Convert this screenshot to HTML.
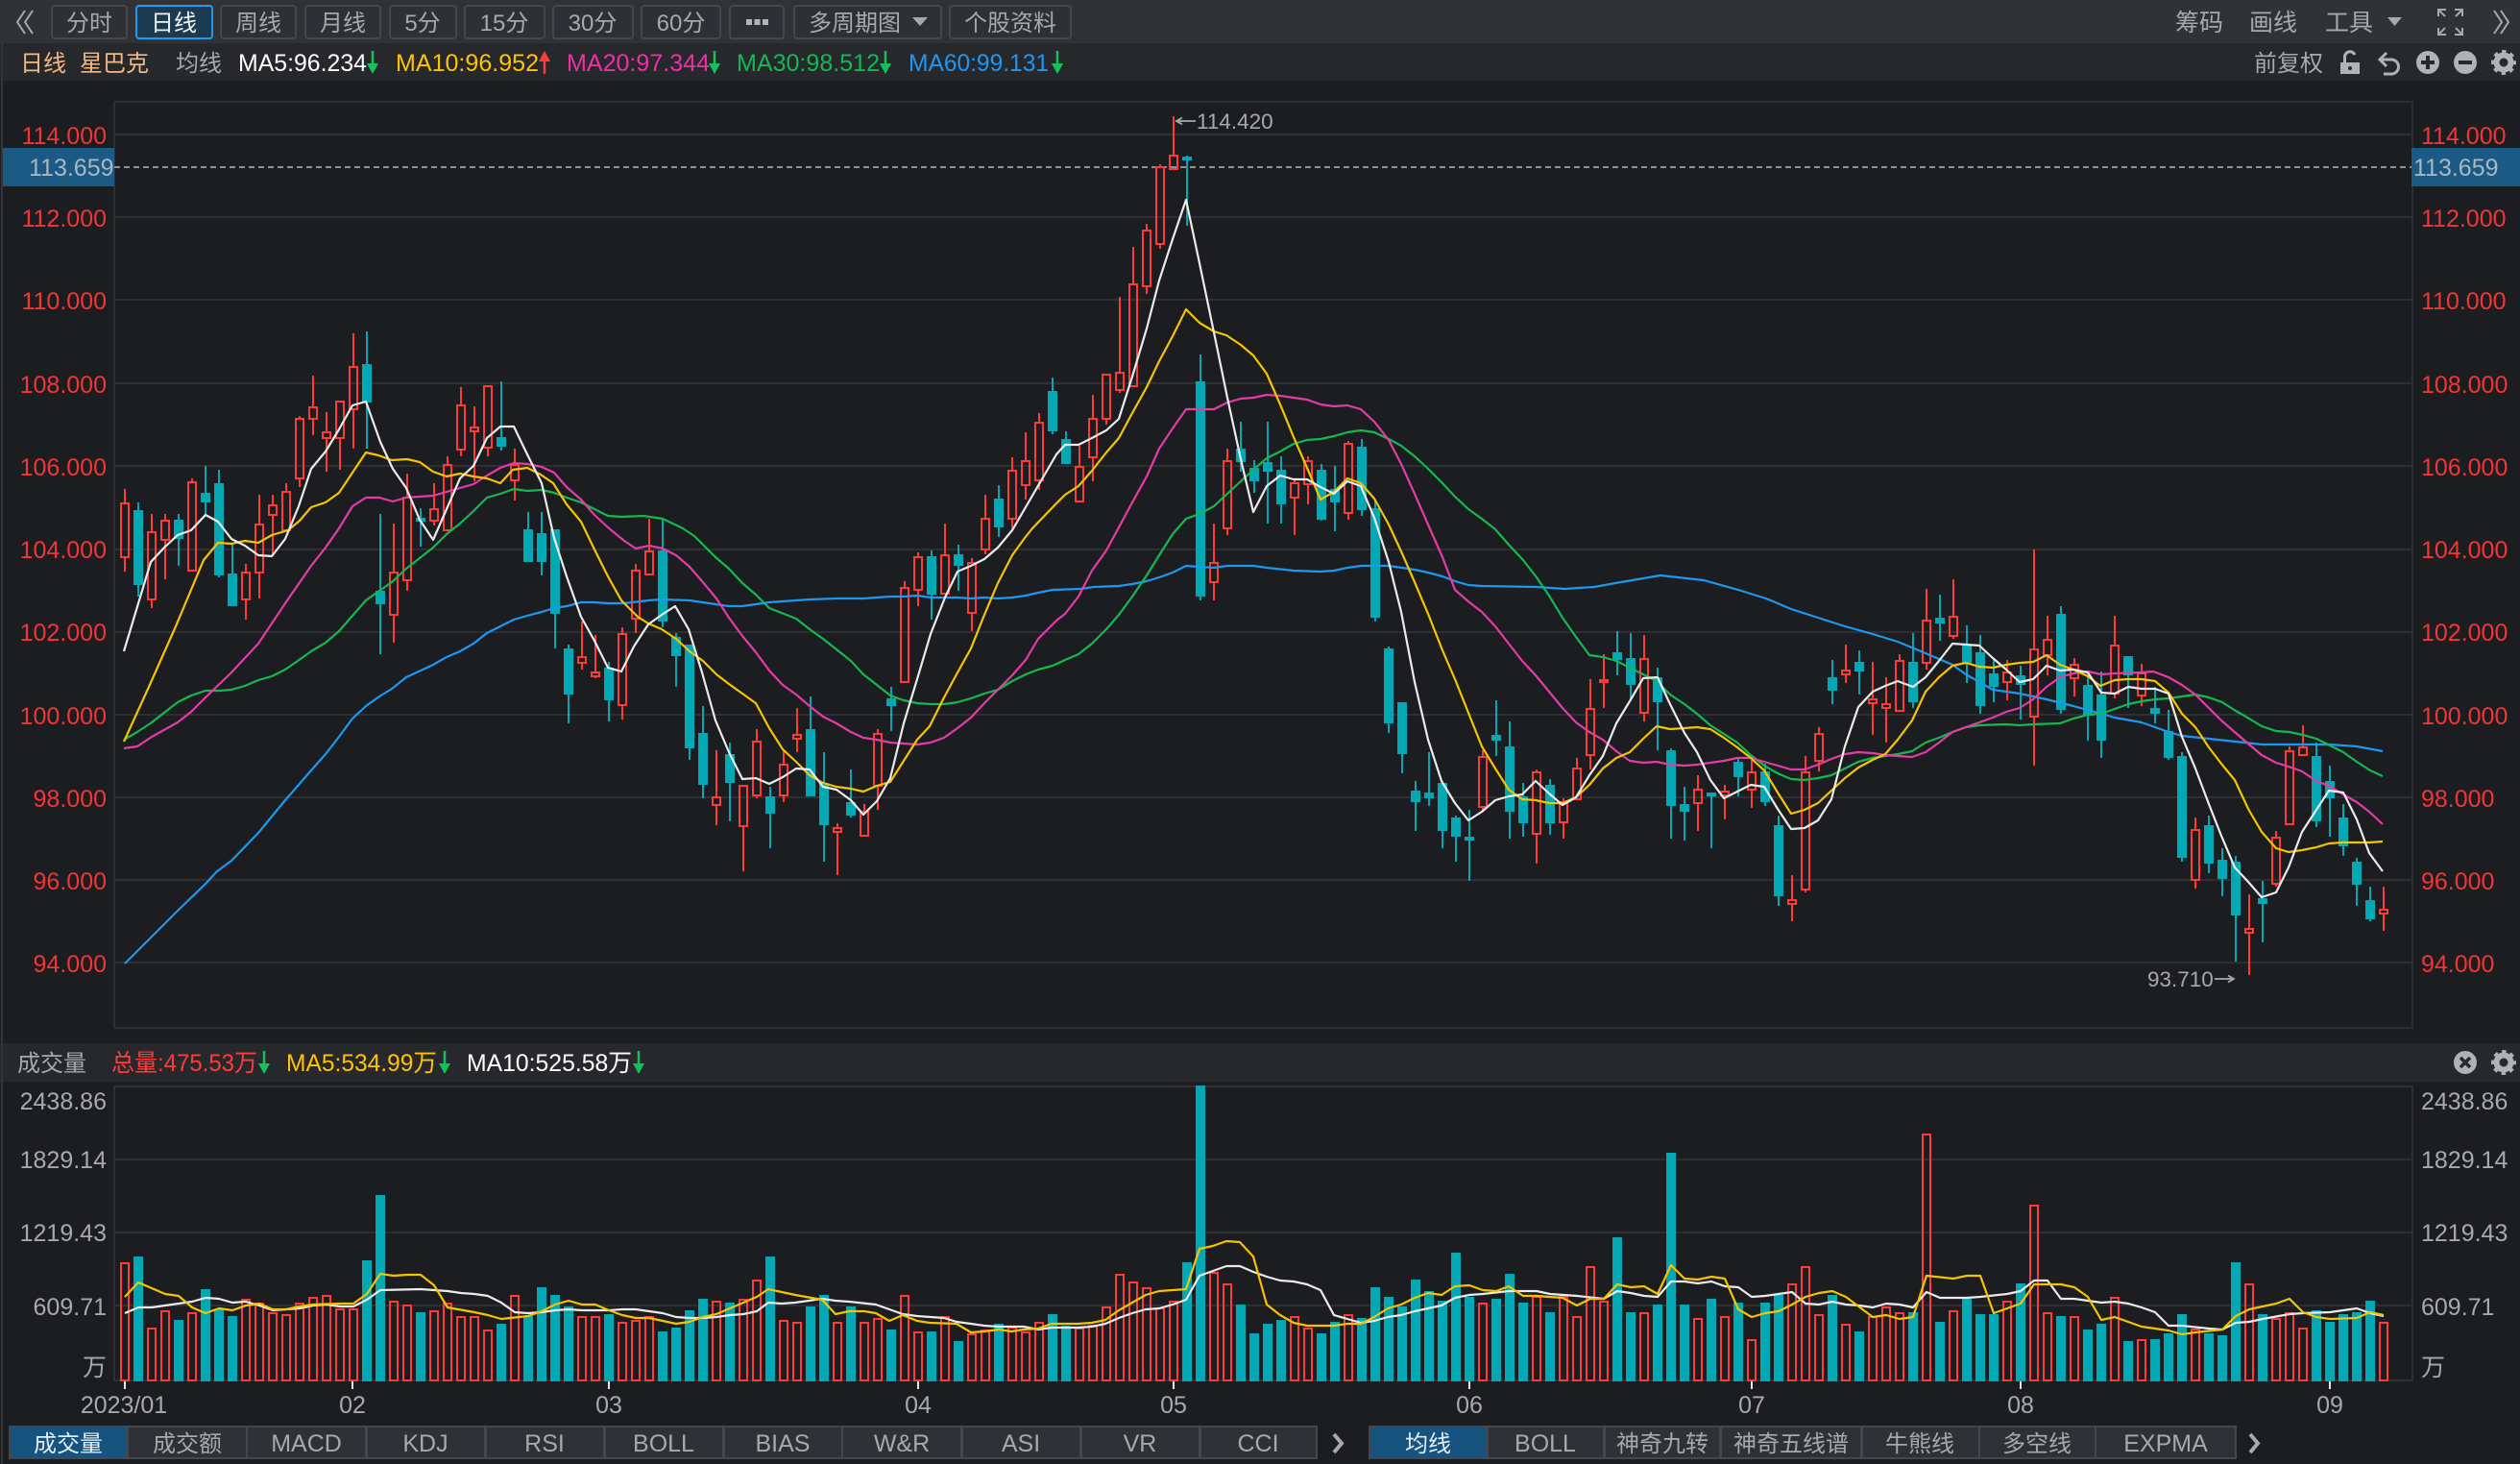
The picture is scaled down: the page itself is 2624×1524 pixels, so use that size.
<!DOCTYPE html>
<html lang="zh"><head><meta charset="utf-8"><title>星巴克 日线</title>
<style>
html,body{margin:0;padding:0;background:#1c1d21;width:2624px;height:1524px;overflow:hidden}
svg{display:block}
text{font-family:"Liberation Sans","Noto Sans CJK SC",sans-serif;font-size:25px;fill:#a7a9ab}
.r{fill:#f23535}.m{text-anchor:middle}.e{text-anchor:end}
.l{fill:none;stroke-width:2.2;stroke-linejoin:round}
</style></head><body>
<svg xmlns="http://www.w3.org/2000/svg" width="2624" height="1524" viewBox="0 0 2624 1524">
<rect width="2624" height="1524" fill="#1c1d21"/>
<!-- top bars -->
<rect width="2624" height="45" fill="#303236"/>
<rect y="45" width="2624" height="39" fill="#26282c"/>
<rect x="0" y="1086" width="2624" height="40" fill="#26282c"/>
<rect x="1" y="45" width="2" height="1479" fill="#33353a"/>
<!-- toolbar -->
<path d="M26 11L18 23L26 35M34 11L26 23L34 35" fill="none" stroke="#a7a9ab" stroke-width="2"/>
<g fill="#2e3035" stroke="#45474d" stroke-width="2">
<rect x="54" y="6" width="78" height="34" rx="3"/>
<rect x="230" y="6" width="78" height="34" rx="3"/>
<rect x="318" y="6" width="78" height="34" rx="3"/>
<rect x="406" y="6" width="69" height="34" rx="3"/>
<rect x="484" y="6" width="83" height="34" rx="3"/>
<rect x="576" y="6" width="83" height="34" rx="3"/>
<rect x="668" y="6" width="82" height="34" rx="3"/>
<rect x="760" y="6" width="56" height="34" rx="3"/>
<rect x="827" y="6" width="153" height="34" rx="3"/>
<rect x="989" y="6" width="126" height="34" rx="3"/>
</g>
<rect x="142" y="6" width="79" height="34" rx="3" fill="#1c3a50" stroke="#1e9bf0" stroke-width="2"/>
<text x="93" y="32" class="m" style="font-size:24px">分时</text>
<text x="181" y="32" class="m" style="fill:#f0f4f7;font-size:24px">日线</text>
<text x="269" y="32" class="m" style="font-size:24px">周线</text>
<text x="357" y="32" class="m" style="font-size:24px">月线</text>
<text x="440" y="32" class="m" style="font-size:24px">5分</text>
<text x="525" y="32" class="m" style="font-size:24px">15分</text>
<text x="617" y="32" class="m" style="font-size:24px">30分</text>
<text x="709" y="32" class="m" style="font-size:24px">60分</text>
<path d="M777 20h6v6h-6zM785.500 20h6v6h-6zM794 20h6v6h-6z" fill="#b4b6b8"/>
<text x="842" y="32" style="font-size:24px">多周期图</text>
<path d="M950 18h16l-8 9z" fill="#a7a9ab"/>
<text x="1052" y="32" class="m" style="font-size:24px">个股资料</text>
<text x="2265" y="32">筹码</text>
<text x="2342" y="32">画线</text>
<text x="2421" y="32">工具</text>
<path d="M2486 18h15l-7.500 9z" fill="#a7a9ab"/>
<path d="M2539 17V10h8M2539 10L2546 17M2564 17V10h-8M2564 10L2557 17M2539 29V36h8M2539 36L2546 29M2564 29V36h-8M2564 36L2557 29" fill="none" stroke="#a7a9ab" stroke-width="2"/>
<path d="M2597 11L2605 23L2597 35M2604 11L2612 23L2604 35" fill="none" stroke="#a7a9ab" stroke-width="2"/>
<!-- row 2 -->
<text x="21" y="74" style="fill:#f2b885;font-size:24px">日线</text>
<text x="83" y="74" style="fill:#f2b885;font-size:24px">星巴克</text>
<text x="183" y="74" style="font-size:24px">均线</text>
<text x="248" y="74" style="fill:#fff" textLength="134" lengthAdjust="spacingAndGlyphs">MA5:96.234</text>
<text x="412" y="74" style="fill:#ffc400" textLength="149" lengthAdjust="spacingAndGlyphs">MA10:96.952</text>
<text x="590" y="74" style="fill:#ef2fa6" textLength="149" lengthAdjust="spacingAndGlyphs">MA20:97.344</text>
<text x="767" y="74" style="fill:#13b950" textLength="149" lengthAdjust="spacingAndGlyphs">MA30:98.512</text>
<text x="946" y="74" style="fill:#1e96f5" textLength="146" lengthAdjust="spacingAndGlyphs">MA60:99.131</text>
<path d="M388 53V66" stroke="#13c25a" stroke-width="2.500"/><path d="M382 66h12l-6 11z" fill="#13c25a"/>
<path d="M567 77V64" stroke="#ff3b3b" stroke-width="2.500"/><path d="M561 64h12l-6-11z" fill="#ff3b3b"/>
<path d="M744 53V66" stroke="#13c25a" stroke-width="2.500"/><path d="M738 66h12l-6 11z" fill="#13c25a"/>
<path d="M922 53V66" stroke="#13c25a" stroke-width="2.500"/><path d="M916 66h12l-6 11z" fill="#13c25a"/>
<path d="M1101 53V66" stroke="#13c25a" stroke-width="2.500"/><path d="M1095 66h12l-6 11z" fill="#13c25a"/>
<text x="2347" y="74" style="font-size:24px">前复权</text>
<path d="M2437 65h20v12h-20z" fill="#b0b2b4"/><path d="M2441.500 65v-5.500a5.500 5.500 0 0 1 10.500-2.500" fill="none" stroke="#b0b2b4" stroke-width="3"/><circle cx="2447" cy="71" r="2" fill="#26282c"/>
<path d="M2478 62H2490a7.500 7.500 0 0 1 0 15H2482M2485 55L2478 62L2485 69" fill="none" stroke="#b0b2b4" stroke-width="3"/>
<circle cx="2528" cy="65" r="12" fill="#b0b2b4"/><path d="M2521 65h14M2528 58v14" stroke="#26282c" stroke-width="4"/>
<circle cx="2567" cy="65" r="12" fill="#b0b2b4"/><path d="M2560 65h14" stroke="#26282c" stroke-width="4"/>
<circle cx="2607" cy="65" r="7.500" fill="none" stroke="#b0b2b4" stroke-width="6"/><circle cx="2607" cy="65" r="11" fill="none" stroke="#b0b2b4" stroke-width="4" stroke-dasharray="4.320 4.320" stroke-dashoffset="2.160"/>
<!-- price grid -->
<g stroke="#2e2f33" stroke-width="2">
<path d="M119 140H2511M119 226H2511M119 312H2511M119 399H2511M119 485H2511M119 572H2511M119 658H2511M119 744H2511M119 830H2511M119 916H2511M119 1002H2511"/>
<path d="M119 106H2512M119 1070H2512M119 105V1071M2512 105V1071"/>
<path d="M119 1131H2512M119 1207H2512M119 1283H2512M119 1359H2512M119 1437H2512M119 1130V1438M2512 1130V1438"/>
</g>
<rect x="3" y="154" width="116" height="40" fill="#1a5a85"/>
<rect x="2511" y="154" width="113" height="40" fill="#1a5a85"/>
<path d="M119 174H2511" stroke="#8d8e90" stroke-width="2" stroke-dasharray="6 4"/>
<!-- price labels -->
<g class="r">
<text class="r e" x="111" y="150">114.000</text><text class="r e" x="111" y="236">112.000</text><text class="r e" x="111" y="322">110.000</text><text class="r e" x="111" y="409">108.000</text><text class="r e" x="111" y="495">106.000</text><text class="r e" x="111" y="581">104.000</text><text class="r e" x="111" y="667">102.000</text><text class="r e" x="111" y="754">100.000</text><text class="r e" x="111" y="840">98.000</text><text class="r e" x="111" y="926">96.000</text><text class="r e" x="111" y="1012">94.000</text>
<text class="r" x="2521" y="150">114.000</text><text class="r" x="2521" y="236">112.000</text><text class="r" x="2521" y="322">110.000</text><text class="r" x="2521" y="409">108.000</text><text class="r" x="2521" y="495">106.000</text><text class="r" x="2521" y="581">104.000</text><text class="r" x="2521" y="667">102.000</text><text class="r" x="2521" y="754">100.000</text><text class="r" x="2521" y="840">98.000</text><text class="r" x="2521" y="926">96.000</text><text class="r" x="2521" y="1012">94.000</text>
</g>
<text x="30" y="183" style="fill:#a9b8c0">113.659</text>
<text x="2513" y="183" style="fill:#a9b8c0">113.659</text>
<path d="M1245 126H1225M1231 122.500L1225 126L1231 129.500" fill="none" stroke="#a7a9ab" stroke-width="1.800"/>
<text x="1246" y="134" style="font-size:22.500px">114.420</text>
<text x="2236" y="1027" style="font-size:22.500px">93.710</text>
<path d="M2306 1019H2326M2320 1015.500L2326 1019L2320 1022.500" fill="none" stroke="#a7a9ab" stroke-width="1.800"/>
<!-- candles -->
<path fill="none" stroke="#ff3838" stroke-width="2" d="M130 509V524M130 580V595M126 524h8V580h-8zM158 535V554M158 624V633M154 554h8V624h-8zM172 535V542M172 562V603M168 542h8V562h-8zM200 498V502M196 502h8V594h-8zM256 587V596M256 624V645M252 596h8V624h-8zM270 515V546M270 596V623M266 546h8V596h-8zM284 515V526M284 536V578M280 526h8V536h-8zM298 503V512M294 512h8V552h-8zM312 433V436M312 498V507M308 436h8V498h-8zM326 391V424M326 436V453M322 424h8V436h-8zM340 429V450M340 456V491M336 450h8V456h-8zM354 456V489M350 418h8V456h-8zM368 347V382M368 426V467M364 382h8V426h-8zM410 545V596M410 640V669M406 596h8V640h-8zM424 493V518M424 604V615M420 518h8V604h-8zM452 503V530M452 542V547M448 530h8V542h-8zM466 475V484M462 484h8V552h-8zM480 403V422M480 468V475M476 422h8V468h-8zM494 423V445M494 449V501M490 445h8V449h-8zM508 466V475M504 402h8V466h-8zM536 467V484M536 500V521M532 484h8V500h-8zM606 647V684M606 690V697M602 684h8V690h-8zM620 661V700M620 704V706M616 700h8V704h-8zM648 653V660M648 734V749M644 660h8V734h-8zM662 587V594M662 644V659M658 594h8V644h-8zM676 540V574M672 574h8V598h-8zM746 781V830M746 838V859M742 830h8V838h-8zM774 860V907M770 818h8V860h-8zM788 759V772M788 828V831M784 772h8V828h-8zM816 781V796M816 828V835M812 796h8V828h-8zM830 737V765M830 769V783M826 765h8V769h-8zM872 857V862M872 866V911M868 862h8V866h-8zM900 837V845M896 845h8V870h-8zM914 759V764M914 818V843M910 764h8V818h-8zM942 605V612M938 612h8V710h-8zM956 575V580M956 614V631M952 580h8V614h-8zM984 545V578M980 578h8V618h-8zM1012 581V586M1012 638V657M1008 586h8V638h-8zM1026 515V540M1026 572V577M1022 540h8V572h-8zM1054 476V490M1054 540V550M1050 490h8V540h-8zM1068 450V480M1068 505V520M1064 480h8V505h-8zM1082 430V440M1082 500V510M1078 440h8V500h-8zM1124 464V486M1120 486h8V522h-8zM1138 411V436M1138 476V501M1134 436h8V476h-8zM1152 436V442M1148 390h8V436h-8zM1166 309V388M1166 406V409M1162 388h8V406h-8zM1180 257V296M1176 296h8V402h-8zM1194 233V240M1194 298V306M1190 240h8V298h-8zM1208 171V174M1208 254V259M1204 174h8V254h-8zM1222 121V162M1218 162h8V176h-8zM1264 545V586M1264 606V625M1260 586h8V606h-8zM1278 467V480M1278 550V557M1274 480h8V550h-8zM1348 499V503M1348 518V557M1344 503h8V518h-8zM1362 475V480M1362 504V525M1358 480h8V504h-8zM1404 459V462M1404 534V541M1400 462h8V534h-8zM1544 781V788M1544 840V844M1540 788h8V840h-8zM1600 801V804M1600 868V899M1596 804h8V868h-8zM1628 831V835M1628 856V873M1624 835h8V856h-8zM1642 789V800M1638 800h8V832h-8zM1656 707V738M1656 786V801M1652 738h8V786h-8zM1670 681V708M1670 710V737M1666 708h8V710h-8zM1712 661V686M1712 742V751M1708 686h8V742h-8zM1768 807V822M1768 836V865M1764 822h8V836h-8zM1796 817V824M1796 828V853M1792 824h8V828h-8zM1824 791V804M1824 822V841M1820 804h8V822h-8zM1866 911V937M1866 941V959M1862 937h8V941h-8zM1880 787V804M1880 926V929M1876 804h8V926h-8zM1894 757V764M1894 792V803M1890 764h8V792h-8zM1922 671V698M1922 702V711M1918 698h8V702h-8zM1950 689V728M1950 732V765M1946 728h8V732h-8zM1964 705V733M1964 737V773M1960 733h8V737h-8zM1978 681V688M1974 688h8V740h-8zM2006 613V646M2006 690V697M2002 646h8V690h-8zM2034 603V642M2034 662V665M2030 642h8V662h-8zM2090 687V700M2090 710V729M2086 700h8V710h-8zM2118 572V676M2118 746V797M2114 676h8V746h-8zM2132 641V666M2132 682V703M2128 666h8V682h-8zM2160 685V692M2160 706V725M2156 692h8V706h-8zM2202 641V672M2202 722V727M2198 672h8V722h-8zM2230 691V701M2230 724V735M2226 701h8V724h-8zM2286 851V864M2286 916V925M2282 864h8V916h-8zM2342 931V967M2342 971V1015M2338 967h8V971h-8zM2370 865V872M2370 920V923M2366 872h8V920h-8zM2384 777V782M2380 782h8V858h-8zM2398 755V778M2394 778h8V786h-8zM2482 923V947M2482 951V969M2478 947h8V951h-8z"/>
<path fill="#02a9b5" d="M143 523h2V621h-2zM139 531h10V609h-10zM185 535h2V589h-2zM181 541h10V561h-10zM213 485h2V536h-2zM209 513h10V523h-10zM227 489h2V601h-2zM223 503h10V599h-10zM241 567h2V631h-2zM237 597h10V631h-10zM381 345h2V467h-2zM377 379h10V419h-10zM395 535h2V681h-2zM391 615h10V629h-10zM437 529h2V569h-2zM433 539h10V543h-10zM521 397h2V469h-2zM517 455h10V465h-10zM549 533h2V585h-2zM545 551h10V585h-10zM563 533h2V599h-2zM559 555h10V585h-10zM577 551h2V675h-2zM573 551h10V639h-10zM591 671h2V753h-2zM587 675h10V723h-10zM633 689h2V751h-2zM629 695h10V729h-10zM689 540h2V653h-2zM685 573h10V647h-10zM703 659h2V715h-2zM699 663h10V683h-10zM717 671h2V791h-2zM713 671h10V779h-10zM731 735h2V831h-2zM727 763h10V817h-10zM759 773h2V855h-2zM755 785h10V815h-10zM801 819h2V883h-2zM797 829h10V847h-10zM843 725h2V829h-2zM839 759h10V829h-10zM857 783h2V897h-2zM853 815h10V859h-10zM885 801h2V851h-2zM881 835h10V849h-10zM927 715h2V761h-2zM923 727h10V735h-10zM969 573h2V645h-2zM965 579h10V619h-10zM997 567h2V615h-2zM993 577h10V589h-10zM1039 505h2V559h-2zM1035 519h10V549h-10zM1095 393h2V452h-2zM1091 407h10V449h-10zM1109 449h2V483h-2zM1105 457h10V483h-10zM1235 162h2V235h-2zM1231 163h10V167h-10zM1249 369h2V625h-2zM1245 397h10V621h-10zM1291 439h2V491h-2zM1287 467h10V481h-10zM1305 479h2V513h-2zM1301 487h10V501h-10zM1319 439h2V545h-2zM1315 481h10V491h-10zM1333 475h2V545h-2zM1329 489h10V525h-10zM1375 483h2V542h-2zM1371 489h10V541h-10zM1389 485h2V553h-2zM1385 509h10V523h-10zM1417 457h2V537h-2zM1413 465h10V531h-10zM1431 521h2V647h-2zM1427 529h10V643h-10zM1445 673h2V763h-2zM1441 675h10V753h-10zM1459 731h2V805h-2zM1455 731h10V785h-10zM1473 813h2V865h-2zM1469 823h10V835h-10zM1487 783h2V839h-2zM1483 825h10V831h-10zM1501 815h2V883h-2zM1497 815h10V865h-10zM1515 849h2V897h-2zM1511 851h10V871h-10zM1529 843h2V917h-2zM1525 871h10V875h-10zM1557 729h2V787h-2zM1553 765h10V771h-10zM1571 751h2V873h-2zM1567 777h10V845h-10zM1585 815h2V871h-2zM1581 829h10V857h-10zM1613 811h2V869h-2zM1609 817h10V857h-10zM1683 657h2V703h-2zM1679 679h10V687h-10zM1697 659h2V727h-2zM1693 685h10V713h-10zM1725 695h2V781h-2zM1721 705h10V731h-10zM1739 779h2V873h-2zM1735 781h10V839h-10zM1753 819h2V875h-2zM1749 837h10V845h-10zM1781 825h2V883h-2zM1777 825h10V829h-10zM1809 790h2V829h-2zM1805 793h10V809h-10zM1837 795h2V839h-2zM1833 803h10V835h-10zM1851 849h2V943h-2zM1847 859h10V933h-10zM1907 687h2V733h-2zM1903 705h10V719h-10zM1935 677h2V723h-2zM1931 689h10V699h-10zM1991 659h2V737h-2zM1987 689h10V731h-10zM2019 619h2V667h-2zM2015 643h10V649h-10zM2047 651h2V711h-2zM2043 671h10V691h-10zM2061 661h2V743h-2zM2057 679h10V735h-10zM2075 687h2V731h-2zM2071 701h10V715h-10zM2103 693h2V749h-2zM2099 703h10V713h-10zM2145 631h2V743h-2zM2141 639h10V739h-10zM2173 700h2V771h-2zM2169 713h10V745h-10zM2187 699h2V789h-2zM2183 723h10V771h-10zM2215 683h2V737h-2zM2211 683h10V703h-10zM2243 715h2V753h-2zM2239 737h10V743h-10zM2257 739h2V791h-2zM2253 761h10V789h-10zM2271 783h2V897h-2zM2267 787h10V893h-10zM2299 849h2V909h-2zM2295 859h10V899h-10zM2313 883h2V933h-2zM2309 895h10V915h-10zM2327 891h2V1001h-2zM2323 897h10V953h-10zM2355 917h2V981h-2zM2351 935h10V941h-10zM2411 773h2V861h-2zM2407 787h10V855h-10zM2425 797h2V871h-2zM2421 813h10V831h-10zM2439 837h2V891h-2zM2435 851h10V881h-10zM2453 893h2V943h-2zM2449 897h10V921h-10zM2467 923h2V959h-2zM2463 937h10V957h-10z"/>
<!-- MA60 -->
<polyline class="l" stroke="#1b98f0" points="130,1003 183,950 214,920 226,907 241,896 269,867 297,833 324,802 339,785 353,767 367,748 381,735 395,725 408,717 423,705 451,692 465,684 479,678 493,670 507,659 521,652 535,645 549,641 564,637 577,633 590,631 605,627 619,627 633,628 650,628 675,625 690,624 718,625 745,629 759,631 773,631 801,627 829,625 843,624 871,623 899,623 913,622 927,621 941,621 955,620 969,622 997,622 1011,623 1025,622 1039,623 1054,622 1068,620 1081,617 1096,614 1125,613 1139,611 1165,610 1179,608 1194,605 1207,601 1221,596 1235,589 1249,590 1264,591 1278,589 1292,589 1305,589 1319,591 1347,594 1375,595 1389,594 1403,591 1417,589 1431,589 1446,589 1473,593 1487,596 1502,600 1515,605 1529,609 1543,610 1600,611 1629,613 1660,611 1682,607 1729,599 1774,604 1810,614 1829,620 1839,623 1865,634 1893,643 1921,652 1950,660 1976,668 2005,680 2033,692 2047,702 2061,710 2075,718 2103,722 2131,728 2159,735 2188,743 2202,747 2230,752 2244,757 2258,762 2272,766 2300,769 2328,772 2355,775 2397,775 2426,775 2454,777 2481,782"/>
<!-- MA30 -->
<polyline class="l" stroke="#13b950" points="129,770 143,762 158,752 185,731 199,724 214,719 228,719 241,718 255,714 269,708 283,704 297,697 310,688 324,678 339,669 353,657 367,641 381,625 395,615 408,606 423,592 451,570 465,556 479,545 493,532 507,518 521,514 535,509 549,511 564,510 577,513 590,518 605,523 619,530 633,537 647,538 670,537 690,540 711,550 723,558 745,580 759,592 773,607 787,619 801,633 829,644 843,655 857,665 871,676 886,688 899,702 913,713 927,724 941,729 955,732 969,733 983,733 997,731 1011,727 1025,722 1039,718 1054,709 1068,702 1081,697 1096,693 1109,687 1123,681 1137,670 1152,655 1165,640 1179,621 1194,599 1207,578 1221,556 1235,540 1249,535 1264,527 1278,514 1292,501 1305,489 1319,477 1333,470 1347,462 1361,458 1375,457 1389,454 1403,450 1417,448 1431,450 1446,457 1459,464 1473,475 1487,488 1502,503 1515,517 1529,530 1543,540 1557,551 1571,567 1586,583 1600,601 1613,620 1627,643 1641,663 1655,682 1669,684 1683,688 1697,695 1711,702 1725,709 1739,723 1754,733 1767,743 1781,755 1795,764 1809,773 1823,786 1837,797 1851,805 1865,811 1879,812 1893,810 1907,807 1921,800 1935,793 1950,789 1963,787 1976,785 1991,782 2005,773 2019,768 2033,762 2047,757 2061,755 2089,754 2103,755 2117,754 2145,753 2159,748 2174,744 2188,743 2202,738 2216,733 2230,730 2244,728 2258,727 2272,725 2286,723 2300,726 2314,731 2328,740 2342,748 2355,756 2370,761 2384,762 2398,765 2412,769 2426,776 2440,783 2454,793 2468,802 2481,808"/>
<!-- MA20 -->
<polyline class="l" stroke="#e53ba5" points="129,779 143,777 158,767 185,752 199,741 214,726 241,700 269,670 297,628 324,589 339,570 353,550 367,527 381,518 395,518 409,522 423,518 451,516 479,508 493,504 507,495 521,487 535,482 549,483 564,486 577,492 590,507 605,520 619,536 633,549 650,563 662,571 676,568 690,571 704,578 718,590 731,605 746,623 759,643 773,662 787,679 801,698 815,713 829,723 843,735 857,746 871,753 886,762 899,768 913,770 927,773 941,774 955,775 969,773 983,768 997,758 1011,747 1025,732 1039,718 1054,703 1068,687 1081,665 1100,646 1109,639 1123,621 1137,594 1152,573 1165,549 1179,523 1194,496 1207,467 1221,446 1235,426 1249,426 1264,426 1278,419 1292,415 1305,414 1319,411 1333,412 1347,414 1361,416 1375,421 1389,423 1403,422 1417,426 1431,439 1446,458 1459,483 1473,514 1487,546 1502,580 1515,614 1530,627 1543,637 1557,652 1571,670 1585,688 1599,703 1613,720 1627,737 1641,752 1655,762 1669,770 1683,782 1697,792 1711,794 1725,793 1739,796 1754,797 1767,796 1781,794 1795,792 1809,789 1823,789 1837,793 1851,797 1865,801 1879,801 1893,796 1907,790 1921,785 1935,783 1950,784 1963,786 1976,787 1991,788 2005,783 2019,773 2033,762 2047,757 2061,752 2075,747 2089,741 2103,737 2117,728 2131,715 2145,705 2159,701 2174,699 2188,702 2202,701 2230,700 2242,699 2258,705 2272,713 2286,723 2300,737 2313,750 2328,763 2342,775 2355,786 2370,794 2383,798 2397,803 2412,813 2425,818 2440,827 2454,835 2467,845 2481,858"/>
<!-- MA10 -->
<polyline class="l" stroke="#f5c400" points="129,772 155,715 183,652 212,583 227,565 241,566 255,563 269,565 283,557 300,552 312,542 324,528 339,523 353,513 367,492 381,471 394,474 408,479 424,478 437,481 451,491 465,496 479,493 493,496 507,498 521,503 534,489 549,487 563,494 576,503 590,525 605,543 619,572 633,600 647,625 664,642 675,649 689,655 704,665 718,678 732,688 746,702 759,712 773,722 787,732 801,758 815,780 829,793 843,807 857,815 871,819 886,821 899,824 913,818 927,814 941,792 955,770 968,756 982,728 996,702 1011,675 1025,640 1039,607 1054,578 1067,560 1075,550 1100,524 1109,515 1123,506 1137,490 1152,471 1165,456 1179,430 1194,403 1207,376 1221,350 1235,322 1249,336 1264,345 1277,349 1292,359 1305,370 1319,389 1333,421 1347,455 1361,487 1375,520 1389,512 1403,498 1417,503 1431,519 1446,546 1459,574 1473,606 1487,639 1502,677 1515,707 1529,742 1543,777 1557,800 1571,822 1585,832 1599,833 1613,836 1627,836 1641,830 1655,817 1669,800 1683,789 1697,783 1711,769 1725,756 1739,759 1754,758 1767,757 1781,759 1795,768 1809,778 1823,789 1837,802 1851,825 1865,847 1879,843 1893,836 1907,823 1921,810 1935,799 1950,791 1963,785 1976,770 1991,750 2005,720 2019,705 2033,693 2047,690 2061,694 2075,695 2089,692 2103,690 2117,689 2131,682 2145,692 2159,697 2174,704 2187,714 2202,708 2216,707 2230,707 2244,709 2258,721 2272,743 2286,757 2300,778 2313,795 2327,812 2341,842 2355,866 2370,883 2383,887 2397,885 2412,882 2425,878 2440,877 2454,877 2467,877 2481,876"/>
<!-- MA5 -->
<polyline class="l" stroke="#ebebeb" points="129,678 157,585 171,570 185,557 199,552 214,536 227,543 241,561 255,568 269,578 283,579 297,561 311,527 324,488 339,470 353,447 367,422 381,418 396,460 409,488 423,508 437,541 451,562 465,530 479,498 493,485 507,456 521,444 535,444 549,473 564,503 577,560 590,600 605,642 619,667 633,695 647,699 660,673 675,650 689,640 703,631 717,655 731,700 745,750 759,783 773,811 787,810 801,816 815,809 829,800 843,801 857,819 871,822 886,833 899,848 913,834 927,810 941,753 955,707 969,660 984,622 997,595 1011,589 1025,582 1039,570 1054,552 1100,473 1109,463 1123,463 1137,456 1152,448 1165,436 1179,392 1194,342 1207,292 1221,249 1235,208 1249,274 1264,346 1278,414 1292,478 1305,533 1319,506 1333,495 1347,499 1361,499 1375,507 1389,514 1403,501 1417,506 1431,539 1446,585 1459,637 1473,710 1487,770 1501,813 1515,836 1529,854 1543,845 1557,833 1571,829 1585,827 1599,813 1613,826 1627,838 1641,830 1655,807 1669,787 1683,753 1697,730 1711,706 1726,705 1739,733 1754,763 1767,783 1781,812 1795,831 1809,824 1823,817 1837,819 1851,842 1865,863 1879,862 1893,854 1907,832 1921,777 1935,736 1950,720 1963,714 1976,709 1992,715 2005,705 2019,688 2033,670 2047,671 2061,672 2075,685 2089,697 2103,710 2117,707 2131,693 2145,698 2159,697 2174,700 2188,721 2202,722 2216,715 2230,717 2244,717 2258,722 2272,767 2286,800 2300,837 2313,870 2327,903 2341,918 2355,934 2370,929 2383,903 2397,866 2412,843 2425,823 2440,825 2454,853 2467,888 2481,907"/>
<!-- volume header -->
<text x="18" y="1115" style="font-size:24px">成交量</text>
<text x="116" y="1115" style="fill:#ff3b3b" textLength="152" lengthAdjust="spacingAndGlyphs">总量:475.53万</text>
<path d="M275 1094V1107" stroke="#13c25a" stroke-width="2.500"/><path d="M269 1107h12l-6 11z" fill="#13c25a"/>
<text x="298" y="1115" style="fill:#ffc400" textLength="157" lengthAdjust="spacingAndGlyphs">MA5:534.99万</text>
<path d="M463 1094V1107" stroke="#13c25a" stroke-width="2.500"/><path d="M457 1107h12l-6 11z" fill="#13c25a"/>
<text x="486" y="1115" style="fill:#fff" textLength="172" lengthAdjust="spacingAndGlyphs">MA10:525.58万</text>
<path d="M665 1094V1107" stroke="#13c25a" stroke-width="2.500"/><path d="M659 1107h12l-6 11z" fill="#13c25a"/>
<circle cx="2567" cy="1106" r="12" fill="#b0b2b4"/><path d="M2562 1101l10 10M2572 1101l-10 10" stroke="#26282c" stroke-width="3.500"/>
<circle cx="2607" cy="1106" r="7.500" fill="none" stroke="#b0b2b4" stroke-width="6"/><circle cx="2607" cy="1106" r="11" fill="none" stroke="#b0b2b4" stroke-width="4" stroke-dasharray="4.320 4.320" stroke-dashoffset="2.160"/>
<!-- volume labels -->
<text class="e" x="111" y="1155">2438.86</text><text class="e" x="111" y="1216">1829.14</text><text class="e" x="111" y="1292">1219.43</text><text class="e" x="111" y="1369">609.71</text><text class="e" x="111" y="1432">万</text>
<text x="2521" y="1155">2438.86</text><text x="2521" y="1216">1829.14</text><text x="2521" y="1292">1219.43</text><text x="2521" y="1369">609.71</text><text x="2521" y="1432">万</text>
<!-- volume bars -->
<path fill="#02a9b5" d="M139 1308h10V1438h-10zM181 1374h10V1438h-10zM209 1342h10V1438h-10zM223 1363h10V1438h-10zM237 1370h10V1438h-10zM377 1312h10V1438h-10zM391 1244h10V1438h-10zM433 1366h10V1438h-10zM517 1378h10V1438h-10zM545 1370h10V1438h-10zM559 1340h10V1438h-10zM573 1348h10V1438h-10zM587 1360h10V1438h-10zM629 1368h10V1438h-10zM685 1386h10V1438h-10zM699 1382h10V1438h-10zM713 1364h10V1438h-10zM727 1352h10V1438h-10zM755 1356h10V1438h-10zM797 1308h10V1438h-10zM839 1360h10V1438h-10zM853 1348h10V1438h-10zM881 1360h10V1438h-10zM923 1384h10V1438h-10zM965 1386h10V1438h-10zM993 1396h10V1438h-10zM1035 1378h10V1438h-10zM1091 1368h10V1438h-10zM1105 1380h10V1438h-10zM1231 1314h10V1438h-10zM1245 1130h10V1438h-10zM1287 1358h10V1438h-10zM1301 1388h10V1438h-10zM1315 1378h10V1438h-10zM1329 1374h10V1438h-10zM1371 1388h10V1438h-10zM1385 1376h10V1438h-10zM1413 1372h10V1438h-10zM1427 1340h10V1438h-10zM1441 1350h10V1438h-10zM1455 1360h10V1438h-10zM1469 1332h10V1438h-10zM1483 1344h10V1438h-10zM1497 1354h10V1438h-10zM1511 1304h10V1438h-10zM1525 1350h10V1438h-10zM1553 1352h10V1438h-10zM1567 1326h10V1438h-10zM1581 1356h10V1438h-10zM1609 1366h10V1438h-10zM1679 1288h10V1438h-10zM1693 1366h10V1438h-10zM1721 1358h10V1438h-10zM1735 1200h10V1438h-10zM1749 1358h10V1438h-10zM1777 1352h10V1438h-10zM1805 1356h10V1438h-10zM1833 1356h10V1438h-10zM1847 1348h10V1438h-10zM1903 1348h10V1438h-10zM1931 1386h10V1438h-10zM1987 1366h10V1438h-10zM2015 1376h10V1438h-10zM2043 1352h10V1438h-10zM2057 1368h10V1438h-10zM2071 1368h10V1438h-10zM2099 1336h10V1438h-10zM2141 1370h10V1438h-10zM2169 1384h10V1438h-10zM2183 1378h10V1438h-10zM2211 1396h10V1438h-10zM2239 1394h10V1438h-10zM2253 1388h10V1438h-10zM2267 1368h10V1438h-10zM2295 1388h10V1438h-10zM2309 1390h10V1438h-10zM2323 1314h10V1438h-10zM2351 1368h10V1438h-10zM2407 1364h10V1438h-10zM2421 1376h10V1438h-10zM2435 1368h10V1438h-10zM2449 1366h10V1438h-10zM2463 1354h10V1438h-10z"/>
<path fill="none" stroke="#ff3838" stroke-width="2" d="M126 1315h8V1437h-8zM154 1383h8V1437h-8zM168 1365h8V1437h-8zM196 1367h8V1437h-8zM252 1353h8V1437h-8zM266 1357h8V1437h-8zM280 1367h8V1437h-8zM294 1369h8V1437h-8zM308 1357h8V1437h-8zM322 1351h8V1437h-8zM336 1349h8V1437h-8zM350 1363h8V1437h-8zM364 1363h8V1437h-8zM406 1355h8V1437h-8zM420 1359h8V1437h-8zM448 1365h8V1437h-8zM462 1357h8V1437h-8zM476 1371h8V1437h-8zM490 1371h8V1437h-8zM504 1385h8V1437h-8zM532 1349h8V1437h-8zM602 1371h8V1437h-8zM616 1371h8V1437h-8zM644 1377h8V1437h-8zM658 1375h8V1437h-8zM672 1371h8V1437h-8zM742 1355h8V1437h-8zM770 1353h8V1437h-8zM784 1333h8V1437h-8zM812 1375h8V1437h-8zM826 1377h8V1437h-8zM868 1377h8V1437h-8zM896 1377h8V1437h-8zM910 1373h8V1437h-8zM938 1349h8V1437h-8zM952 1387h8V1437h-8zM980 1371h8V1437h-8zM1008 1389h8V1437h-8zM1022 1385h8V1437h-8zM1050 1382h8V1437h-8zM1064 1387h8V1437h-8zM1078 1377h8V1437h-8zM1120 1383h8V1437h-8zM1134 1380h8V1437h-8zM1148 1361h8V1437h-8zM1162 1327h8V1437h-8zM1176 1335h8V1437h-8zM1190 1341h8V1437h-8zM1204 1362h8V1437h-8zM1218 1355h8V1437h-8zM1260 1325h8V1437h-8zM1274 1337h8V1437h-8zM1344 1371h8V1437h-8zM1358 1383h8V1437h-8zM1400 1369h8V1437h-8zM1540 1357h8V1437h-8zM1596 1350h8V1437h-8zM1624 1350h8V1437h-8zM1638 1371h8V1437h-8zM1652 1319h8V1437h-8zM1666 1355h8V1437h-8zM1708 1367h8V1437h-8zM1764 1373h8V1437h-8zM1792 1371h8V1437h-8zM1820 1395h8V1437h-8zM1862 1337h8V1437h-8zM1876 1319h8V1437h-8zM1890 1369h8V1437h-8zM1918 1379h8V1437h-8zM1946 1371h8V1437h-8zM1960 1361h8V1437h-8zM1974 1367h8V1437h-8zM2002 1181h8V1437h-8zM2030 1365h8V1437h-8zM2086 1355h8V1437h-8zM2114 1255h8V1437h-8zM2128 1367h8V1437h-8zM2156 1371h8V1437h-8zM2198 1351h8V1437h-8zM2226 1395h8V1437h-8zM2282 1384h8V1437h-8zM2338 1337h8V1437h-8zM2366 1373h8V1437h-8zM2380 1367h8V1437h-8zM2394 1383h8V1437h-8zM2478 1377h8V1437h-8z"/>
<!-- volume MA -->
<polyline class="l" stroke="#ebebeb" points="130,1367 144,1361 158,1361 186,1357 200,1355 214,1351 228,1352 242,1356 256,1355 270,1359 284,1364 298,1363 312,1362 326,1359 340,1358 354,1360 368,1360 382,1353 396,1343 438,1342 466,1344 480,1346 494,1347 508,1349 522,1356 536,1366 550,1367 564,1366 578,1364 592,1363 606,1364 634,1364 648,1363 662,1363 676,1365 690,1367 704,1371 718,1372 732,1372 746,1371 760,1369 774,1368 788,1365 800,1356 814,1357 828,1356 856,1352 870,1354 884,1355 912,1358 926,1363 940,1368 955,1370 983,1372 996,1376 1011,1378 1025,1380 1040,1381 1066,1381 1081,1384 1095,1382 1122,1382 1137,1381 1151,1378 1165,1372 1179,1367 1193,1363 1207,1362 1221,1358 1235,1353 1249,1328 1263,1323 1277,1318 1291,1318 1305,1324 1319,1329 1333,1333 1347,1334 1361,1337 1375,1343 1389,1369 1403,1373 1417,1377 1431,1375 1445,1371 1459,1369 1473,1365 1487,1362 1501,1359 1515,1351 1530,1348 1544,1347 1571,1344 1600,1344 1614,1347 1642,1349 1670,1352 1684,1344 1698,1346 1712,1349 1726,1350 1740,1334 1754,1334 1768,1336 1782,1334 1796,1339 1810,1340 1824,1350 1838,1349 1852,1347 1866,1345 1880,1357 1894,1358 1908,1355 1922,1358 1936,1359 1950,1361 1964,1357 1978,1358 1992,1361 2006,1345 2020,1351 2048,1351 2062,1350 2090,1347 2104,1344 2118,1333 2132,1333 2146,1352 2160,1352 2188,1356 2202,1355 2216,1357 2230,1361 2244,1366 2258,1380 2272,1380 2300,1383 2314,1384 2328,1377 2342,1376 2356,1373 2384,1368 2398,1367 2426,1366 2454,1362 2468,1367 2482,1370"/>
<polyline class="l" stroke="#f5c400" points="130,1350 144,1335 172,1347 186,1349 200,1361 214,1367 228,1362 242,1364 256,1359 270,1357 284,1363 298,1363 312,1360 326,1358 354,1357 368,1357 382,1347 396,1326 410,1328 424,1327 438,1327 452,1338 466,1361 494,1366 508,1369 522,1373 550,1370 564,1365 578,1358 592,1354 606,1358 620,1358 634,1364 648,1369 662,1372 676,1372 690,1375 704,1378 718,1376 732,1371 746,1368 760,1362 774,1356 788,1350 800,1342 828,1348 856,1353 870,1368 884,1365 900,1365 912,1367 926,1375 940,1369 955,1375 968,1377 996,1378 1011,1387 1025,1386 1040,1384 1053,1386 1066,1384 1081,1383 1095,1378 1109,1378 1122,1378 1137,1377 1151,1374 1165,1364 1179,1356 1193,1348 1207,1344 1221,1343 1235,1342 1249,1300 1263,1297 1277,1292 1291,1293 1305,1308 1319,1358 1333,1369 1347,1377 1361,1380 1389,1380 1403,1378 1417,1378 1431,1371 1445,1362 1459,1358 1473,1351 1487,1346 1501,1348 1515,1339 1530,1338 1544,1343 1558,1344 1571,1339 1586,1349 1600,1349 1627,1351 1642,1359 1656,1352 1670,1352 1684,1337 1698,1340 1712,1339 1726,1347 1740,1317 1754,1331 1768,1332 1782,1329 1796,1331 1810,1363 1824,1371 1838,1367 1852,1365 1866,1358 1880,1350 1894,1346 1908,1344 1922,1350 1950,1371 1964,1369 1978,1373 1992,1371 2006,1328 2034,1331 2048,1328 2062,1328 2076,1367 2104,1357 2118,1337 2146,1337 2160,1340 2174,1350 2188,1374 2202,1371 2230,1381 2258,1385 2272,1389 2286,1387 2314,1384 2328,1370 2342,1363 2356,1360 2370,1357 2384,1352 2398,1366 2412,1371 2426,1373 2454,1372 2468,1366 2482,1369"/>
<!-- ticks and dates -->
<path d="M130 1438v8M367 1438v8M634 1438v8M956 1438v8M1222 1438v8M1530 1438v8M1824 1438v8M2104 1438v8M2426 1438v8" stroke="#e8e8e8" stroke-width="2"/>
<text class="m" x="129" y="1471">2023/01</text><text class="m" x="367" y="1471">02</text><text class="m" x="634" y="1471">03</text><text class="m" x="956" y="1471">04</text><text class="m" x="1222" y="1471">05</text><text class="m" x="1530" y="1471">06</text><text class="m" x="1824" y="1471">07</text><text class="m" x="2104" y="1471">08</text><text class="m" x="2426" y="1471">09</text>
<!-- tabs -->
<rect x="9" y="1484" width="1363" height="35" fill="#45474d"/>
<rect x="1425" y="1484" width="904" height="35" fill="#45474d"/>
<g fill="#2f3136">
<rect x="134" y="1486" width="122" height="31"/><rect x="258" y="1486" width="122" height="31"/><rect x="383" y="1486" width="121" height="31"/><rect x="507" y="1486" width="121" height="31"/><rect x="631" y="1486" width="121" height="31"/><rect x="755" y="1486" width="121" height="31"/><rect x="878" y="1486" width="122" height="31"/><rect x="1003" y="1486" width="121" height="31"/><rect x="1127" y="1486" width="121" height="31"/><rect x="1251" y="1486" width="119" height="31"/>
<rect x="1550" y="1486" width="119" height="31"/><rect x="1672" y="1486" width="118" height="31"/><rect x="1793" y="1486" width="144" height="31"/><rect x="1940" y="1486" width="120" height="31"/><rect x="2062" y="1486" width="119" height="31"/><rect x="2183" y="1486" width="144" height="31"/>
</g>
<rect x="11" y="1486" width="121" height="31" fill="#16537f"/>
<rect x="1427" y="1486" width="121" height="31" fill="#16537f"/>
<text class="m" x="71" y="1511" style="fill:#e3edf3;font-size:24px">成交量</text>
<text class="m" x="195" y="1511" style="font-size:24px">成交额</text>
<text class="m" x="319" y="1511">MACD</text><text class="m" x="443" y="1511">KDJ</text><text class="m" x="567" y="1511">RSI</text><text class="m" x="691" y="1511">BOLL</text><text class="m" x="815" y="1511">BIAS</text><text class="m" x="939" y="1511">W&amp;R</text><text class="m" x="1063" y="1511">ASI</text><text class="m" x="1187" y="1511">VR</text><text class="m" x="1310" y="1511">CCI</text>
<path d="M1389 1493L1397 1502.500L1389 1512" fill="none" stroke="#a7a9ab" stroke-width="4"/>
<text class="m" x="1487" y="1511" style="fill:#e3edf3;font-size:24px">均线</text>
<text class="m" x="1609" y="1511">BOLL</text>
<text class="m" x="1731" y="1511" style="font-size:24px">神奇九转</text>
<text class="m" x="1865" y="1511" style="font-size:24px">神奇五线谱</text>
<text class="m" x="1999" y="1511" style="font-size:24px">牛熊线</text>
<text class="m" x="2121" y="1511" style="font-size:24px">多空线</text>
<text class="m" x="2255" y="1511">EXPMA</text>
<path d="M2343 1493L2351 1502.500L2343 1512" fill="none" stroke="#a7a9ab" stroke-width="4"/>
</svg>
</body></html>
